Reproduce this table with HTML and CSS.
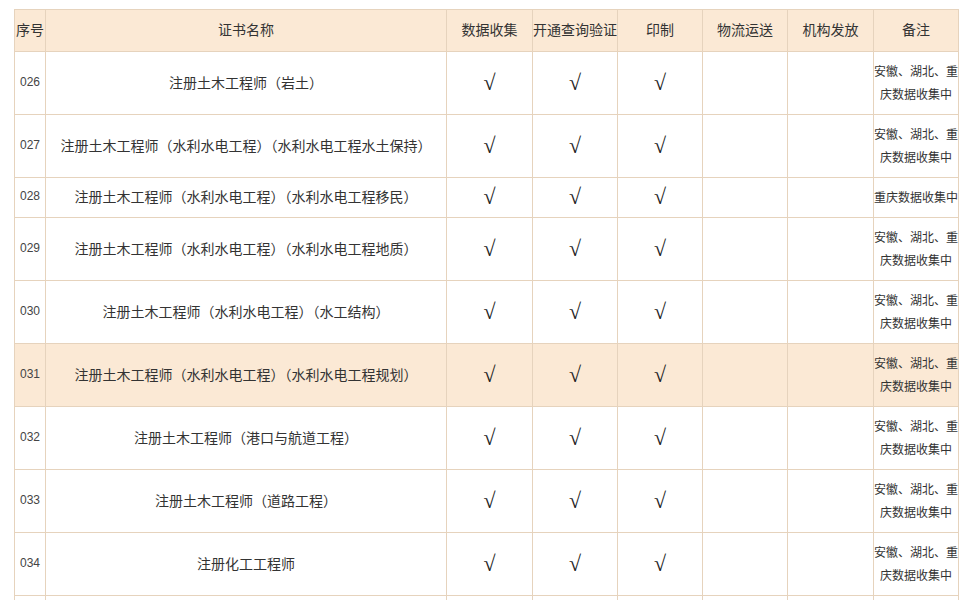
FILE: index.html
```html
<!DOCTYPE html>
<html lang="zh-CN">
<head>
<meta charset="utf-8">
<title>证书进度</title>
<link rel="stylesheet" href="styles.css">
</head>
<body>
<div class="wrap">
<table class="cert">
<colgroup>
<col class="c-no"><col class="c-name"><col class="c-a"><col class="c-b"><col class="c-c"><col class="c-d"><col class="c-e"><col class="c-f">
</colgroup>
<thead>
<tr><th>序号</th><th>证书名称</th><th>数据收集</th><th>开通查询验证</th><th>印制</th><th>物流运送</th><th>机构发放</th><th>备注</th></tr>
</thead>
<tbody>
<tr><td class="no">026</td><td>注册土木工程师（岩土）</td><td class="ck">√</td><td class="ck">√</td><td class="ck">√</td><td></td><td></td><td class="note">安徽、湖北、重庆数据收集中</td></tr>
<tr><td class="no">027</td><td>注册土木工程师（水利水电工程）（水利水电工程水土保持）</td><td class="ck">√</td><td class="ck">√</td><td class="ck">√</td><td></td><td></td><td class="note">安徽、湖北、重庆数据收集中</td></tr>
<tr><td class="no">028</td><td>注册土木工程师（水利水电工程）（水利水电工程移民）</td><td class="ck">√</td><td class="ck">√</td><td class="ck">√</td><td></td><td></td><td class="note">重庆数据收集中</td></tr>
<tr><td class="no">029</td><td>注册土木工程师（水利水电工程）（水利水电工程地质）</td><td class="ck">√</td><td class="ck">√</td><td class="ck">√</td><td></td><td></td><td class="note">安徽、湖北、重庆数据收集中</td></tr>
<tr><td class="no">030</td><td>注册土木工程师（水利水电工程）（水工结构）</td><td class="ck">√</td><td class="ck">√</td><td class="ck">√</td><td></td><td></td><td class="note">安徽、湖北、重庆数据收集中</td></tr>
<tr class="hl"><td class="no">031</td><td>注册土木工程师（水利水电工程）（水利水电工程规划）</td><td class="ck">√</td><td class="ck">√</td><td class="ck">√</td><td></td><td></td><td class="note">安徽、湖北、重庆数据收集中</td></tr>
<tr><td class="no">032</td><td>注册土木工程师（港口与航道工程）</td><td class="ck">√</td><td class="ck">√</td><td class="ck">√</td><td></td><td></td><td class="note">安徽、湖北、重庆数据收集中</td></tr>
<tr><td class="no">033</td><td>注册土木工程师（道路工程）</td><td class="ck">√</td><td class="ck">√</td><td class="ck">√</td><td></td><td></td><td class="note">安徽、湖北、重庆数据收集中</td></tr>
<tr><td class="no">034</td><td>注册化工工程师</td><td class="ck">√</td><td class="ck">√</td><td class="ck">√</td><td></td><td></td><td class="note">安徽、湖北、重庆数据收集中</td></tr>
<tr><td class="no"></td><td></td><td></td><td></td><td></td><td></td><td></td><td class="note"></td></tr>
</tbody>
</table>
</div>
</body>
</html>
```

FILE: styles.css
```css
html, body {
  margin: 0;
  padding: 0;
  background: #ffffff;
}
body {
  font-family: "Noto Sans CJK SC", "Liberation Sans", sans-serif;
  color: #333333;
  overflow: hidden;
}
.wrap {
  padding: 9px 0 0 14px;
}
.cert {
  border-collapse: collapse;
  table-layout: fixed;
  width: 945px;
}
.c-no { width: 31px; }
.c-name { width: 401px; }
.c-a { width: 86px; }
.c-b { width: 85px; }
.c-c { width: 85px; }
.c-d { width: 85px; }
.c-e { width: 86px; }
.c-f { width: 85px; }
.cert th, .cert td {
  border: 1px solid #e6d3bd;
  text-align: center;
  vertical-align: middle;
  font-size: 14px;
  line-height: 23px;
  padding: 7px 0 9px;
  font-weight: normal;
  white-space: nowrap;
  overflow: hidden;
}
.cert thead th {
  background: #fbe9d5;
  padding: 8px 0 10px;
  color: #333333;
}
.cert tr.hl td {
  background: #fbe9d5;
}
.cert td.no {
  font-family: "Liberation Sans", Arial, sans-serif;
  font-size: 12px;
  color: #444444;
}
.cert td.ck {
  font-family: "Liberation Serif", serif;
  font-size: 22px;
  color: #222222;
}
.cert td.note {
  font-size: 12px;
  white-space: normal;
  word-break: break-all;
  color: #333333;
}
```
